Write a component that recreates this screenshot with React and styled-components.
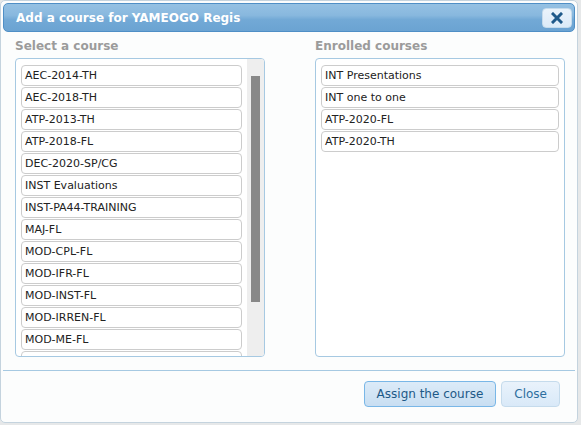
import React from "react";
import styled, { createGlobalStyle } from "styled-components";

const Global = createGlobalStyle`
  html, body {
    margin: 0;
    padding: 0;
    background: #e6e8e9;
    font-family: "DejaVu Sans", Verdana, sans-serif;
  }
`;

const Dialog = styled.div`
  width: 578px;
  height: 423px;
  box-sizing: border-box;
  border: 1px solid #c4d3de;
  border-radius: 5px;
  background: #fcfdfd;
  padding: 2px;
  display: flex;
  flex-direction: column;
`;

const TitleBar = styled.div`
  height: 29px;
  box-sizing: border-box;
  border: 1px solid #4f8fc6;
  border-radius: 5px;
  background: linear-gradient(180deg, #95c1e3 0%, #88b8de 42%, #72a9d6 58%, #6ba3d2 100%);
  display: flex;
  align-items: center;
  padding: 0 2px 0 12px;
`;

const Title = styled.span`
  flex: 1;
  color: #fff;
  font-weight: bold;
  font-size: 12px;
  line-height: 16px;
  padding-top: 1px;
`;

const CloseX = styled.button`
  width: 30px;
  height: 20px;
  box-sizing: border-box;
  border: 1px solid #c5dbec;
  border-radius: 4px;
  background: linear-gradient(180deg, #eaf3fb 0%, #dcebf8 100%);
  display: flex;
  align-items: center;
  justify-content: center;
  padding: 0;
`;

const Content = styled.div`
  display: grid;
  grid-template-columns: 250px 250px;
  column-gap: 50px;
  padding: 6px 10px 0 12px;
`;

const Column = styled.div`
  display: flex;
  flex-direction: column;
`;

const Label = styled.div`
  font-size: 12px;
  font-weight: bold;
  line-height: 16px;
  color: #9b9b9b;
  margin-bottom: 4px;
`;

const ListBox = styled.div`
  height: 299px;
  box-sizing: border-box;
  border: 1px solid #a6c9e2;
  border-radius: 4px;
  background: #fff;
  display: flex;
  overflow: hidden;
`;

const Scroller = styled.div`
  flex: 1;
  min-width: 0;
  overflow: hidden;
  padding: 6px 5px 0 5px;
`;

const Track = styled.div`
  flex: none;
  width: 17px;
  background: #eeeeee;
  padding-top: 17px;
  box-sizing: border-box;
`;

const Thumb = styled.div`
  width: 9px;
  height: 226px;
  margin-left: 4px;
  background: #888888;
`;

const Item = styled.div`
  height: 21px;
  box-sizing: border-box;
  border: 1px solid #cccccc;
  border-radius: 4px;
  background: #fff;
  margin-bottom: 1px;
  padding-left: 3px;
  font-size: 11px;
  line-height: 20px;
  color: #222;
  white-space: nowrap;
  overflow: hidden;
`;

const ButtonPane = styled.div`
  margin-top: 13px;
  border-top: 1px solid #a6c9e2;
  display: flex;
  justify-content: flex-end;
  gap: 5px;
  padding: 10px 15px 0 0;
`;

const Button = styled.button`
  height: 26px;
  box-sizing: border-box;
  padding: 0 12px;
  border-radius: 4px;
  font-family: "DejaVu Sans", Verdana, sans-serif;
  font-size: 12px;
  border: 1px solid ${(p) => (p.$primary ? "#79b7e7" : "#c5dbec")};
  color: ${(p) => (p.$primary ? "#1d5987" : "#2e6e9e")};
  background: ${(p) =>
    p.$primary
      ? "linear-gradient(180deg, #dcebf8 0%, #d2e5f5 50%, #c8def2 100%)"
      : "linear-gradient(180deg, #e9f2fb 0%, #e1eefa 50%, #d9e9f8 100%)"};
`;

const available = [
  "AEC-2014-TH",
  "AEC-2018-TH",
  "ATP-2013-TH",
  "ATP-2018-FL",
  "DEC-2020-SP/CG",
  "INST Evaluations",
  "INST-PA44-TRAINING",
  "MAJ-FL",
  "MOD-CPL-FL",
  "MOD-IFR-FL",
  "MOD-INST-FL",
  "MOD-IRREN-FL",
  "MOD-ME-FL",
  "",
];

const enrolled = ["INT Presentations", "INT one to one", "ATP-2020-FL", "ATP-2020-TH"];

export default function App() {
  return (
    <>
      <Global />
      <Dialog>
        <TitleBar>
          <Title>Add a course for YAMEOGO Regis</Title>
          <CloseX aria-label="close">
            <svg width="12" height="12" viewBox="0 0 12 12">
              <path d="M2 2 L10 10 M10 2 L2 10" stroke="#1f5a8a" strokeWidth="3" strokeLinecap="square" />
            </svg>
          </CloseX>
        </TitleBar>
        <Content>
          <Column>
            <Label>Select a course</Label>
            <ListBox>
              <Scroller>
                {available.map((c, i) => (
                  <Item key={i}>{c}</Item>
                ))}
              </Scroller>
              <Track>
                <Thumb />
              </Track>
            </ListBox>
          </Column>
          <Column>
            <Label>Enrolled courses</Label>
            <ListBox>
              <Scroller>
                {enrolled.map((c) => (
                  <Item key={c}>{c}</Item>
                ))}
              </Scroller>
            </ListBox>
          </Column>
        </Content>
        <ButtonPane>
          <Button $primary>Assign the course</Button>
          <Button>Close</Button>
        </ButtonPane>
      </Dialog>
    </>
  );
}
